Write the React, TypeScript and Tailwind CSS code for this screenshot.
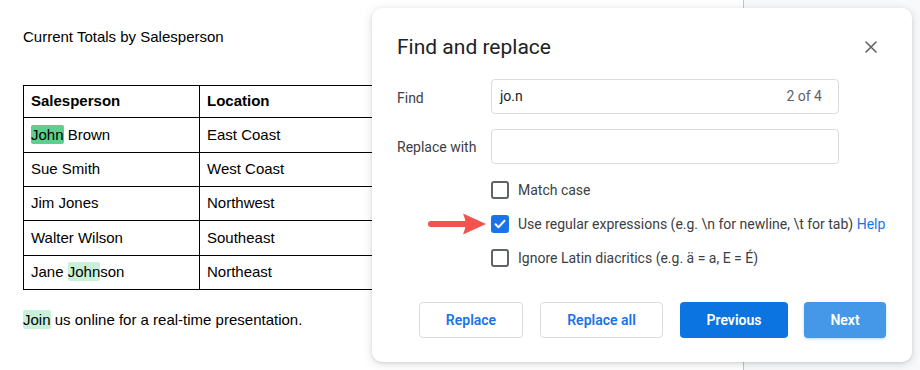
import React from "react";

const rows: { name: React.ReactNode; loc: string; h: string }[] = [
  {
    name: (
      <>
        <span className="bg-[#5cd08e] rounded-[2px] inline-block leading-[19px]">John</span> Brown
      </>
    ),
    loc: "East Coast",
    h: "h-[35px]",
  },
  { name: "Sue Smith", loc: "West Coast", h: "h-[34px]" },
  { name: "Jim Jones", loc: "Northwest", h: "h-[34px]" },
  { name: "Walter Wilson", loc: "Southeast", h: "h-[35px]" },
  {
    name: (
      <>
        Jane <span className="bg-[#c9f0d8] rounded-[2px] inline-block leading-[19px]">John</span>son
      </>
    ),
    loc: "Northeast",
    h: "h-[33px]",
  },
];

function Checkbox({ checked }: { checked?: boolean }) {
  if (checked) {
    return (
      <div className="w-[18px] h-[18px] rounded-[3px] bg-[#1a73e8] flex items-center justify-center shrink-0">
        <svg width="12" height="10" viewBox="0 0 12 10" fill="none">
          <path d="M1.5 5.2 L4.5 8.2 L10.5 1.8" stroke="white" strokeWidth="2" strokeLinecap="round" strokeLinejoin="round" />
        </svg>
      </div>
    );
  }
  return <div className="w-[18px] h-[18px] rounded-[3px] border-2 border-[#5f6368] shrink-0" />;
}

export default function App() {
  return (
    <div className="relative w-[920px] h-[370px] flex bg-[#f8f9fa] overflow-hidden">
      {/* Document page */}
      <div className="w-[744px] h-full bg-white border-r border-[#c4c4c4] pl-[23px] pt-[28px] font-['Liberation_Sans',Arial,sans-serif] text-[15px] text-black">
        <p className="leading-[18px]">Current Totals by Salesperson</p>
        <div className="mt-[39px] w-[400px] border border-black">
          <div className="flex h-[32px] border-b border-black font-bold">
            <div className="w-[176px] border-r border-black pl-[7px] flex items-center">Salesperson</div>
            <div className="flex-1 pl-[7px] flex items-center">Location</div>
          </div>
          {rows.map((r, i) => (
            <div key={i} className={`flex ${r.h} ${i < rows.length - 1 ? "border-b border-black" : ""}`}>
              <div className="w-[176px] border-r border-black pl-[7px] flex items-center">
                <span>{r.name}</span>
              </div>
              <div className="flex-1 pl-[7px] flex items-center">{r.loc}</div>
            </div>
          ))}
        </div>
        <p className="mt-[20px] leading-[19px]">
          <span className="bg-[#c9f0d8] rounded-[2px] inline-block">Join</span> us online for a real-time presentation.
        </p>
      </div>

      {/* Dialog */}
      <div className="absolute left-[372px] top-[8px] w-[540px] h-[354px] bg-white rounded-[10px] shadow-[0_2px_10px_rgba(60,64,67,0.18),0_1px_3px_rgba(60,64,67,0.12)] font-['Roboto',Arial,sans-serif] pl-[25px] pr-[26px] pt-[24px]">
        <div className="flex items-center justify-between h-[30px]">
          <h1 className="text-[21px] text-[#202124] leading-[30px]">Find and replace</h1>
          <svg width="12" height="12" viewBox="0 0 12 12" className="mr-[9px]">
            <path d="M1 1 L11 11 M11 1 L1 11" stroke="#5f6368" strokeWidth="1.6" strokeLinecap="round" />
          </svg>
        </div>

        <div className="mt-[17px] flex items-center">
          <div className="w-[94px] text-[14px] text-[#3c4043] pt-[3px]">Find</div>
          <div className="w-[348px] h-[35px] border border-[#dadce0] rounded-[4px] flex items-center justify-between pl-[8px] pr-[16px] text-[14px]">
            <span className="text-[#202124]">jo.n</span>
            <span className="text-[#5f6368]">2 of 4</span>
          </div>
        </div>

        <div className="mt-[15px] flex items-center">
          <div className="w-[94px] text-[14px] text-[#3c4043] pt-[2px]">Replace with</div>
          <div className="w-[348px] h-[35px] border border-[#dadce0] rounded-[4px]" />
        </div>

        <div className="mt-[17px] ml-[94px] flex flex-col gap-[16px] text-[14px] text-[#3c4043]">
          <div className="flex items-center h-[18px] gap-[9px]">
            <Checkbox />
            <span>Match case</span>
          </div>
          <div className="relative flex items-center h-[18px] gap-[9px]">
            <svg width="60" height="24" viewBox="0 0 60 24" className="absolute left-[-63px] top-[-3px]">
              <path d="M3 12 L38 12" stroke="#f4524d" strokeWidth="6" strokeLinecap="round" />
              <path d="M35 1.5 L58 12 L35 22.5 Q40 12 35 1.5 Z" fill="#f4524d" />
            </svg>
            <Checkbox checked />
            <span>
              Use regular expressions (e.g. \n for newline, \t for tab) <span className="text-[#1a73e8]">Help</span>
            </span>
          </div>
          <div className="flex items-center h-[18px] gap-[9px]">
            <Checkbox />
            <span>Ignore Latin diacritics (e.g. ä = a, E = É)</span>
          </div>
        </div>

        <div className="mt-[35px] ml-[22px] flex items-center gap-[17px] text-[14px] font-semibold">
          <button className="w-[104px] h-[36px] border border-[#dadce0] rounded-[4px] text-[#1a73e8] bg-white">Replace</button>
          <button className="w-[123px] h-[36px] border border-[#dadce0] rounded-[4px] text-[#1a73e8] bg-white">Replace all</button>
          <button className="w-[108px] h-[36px] rounded-[4px] text-white bg-[#0b74e0]">Previous</button>
          <button className="ml-[-1px] w-[82px] h-[36px] rounded-[4px] text-white bg-[#4597e8] shadow-[0_1px_3px_rgba(26,115,232,0.3)]">Next</button>
        </div>
      </div>
    </div>
  );
}
